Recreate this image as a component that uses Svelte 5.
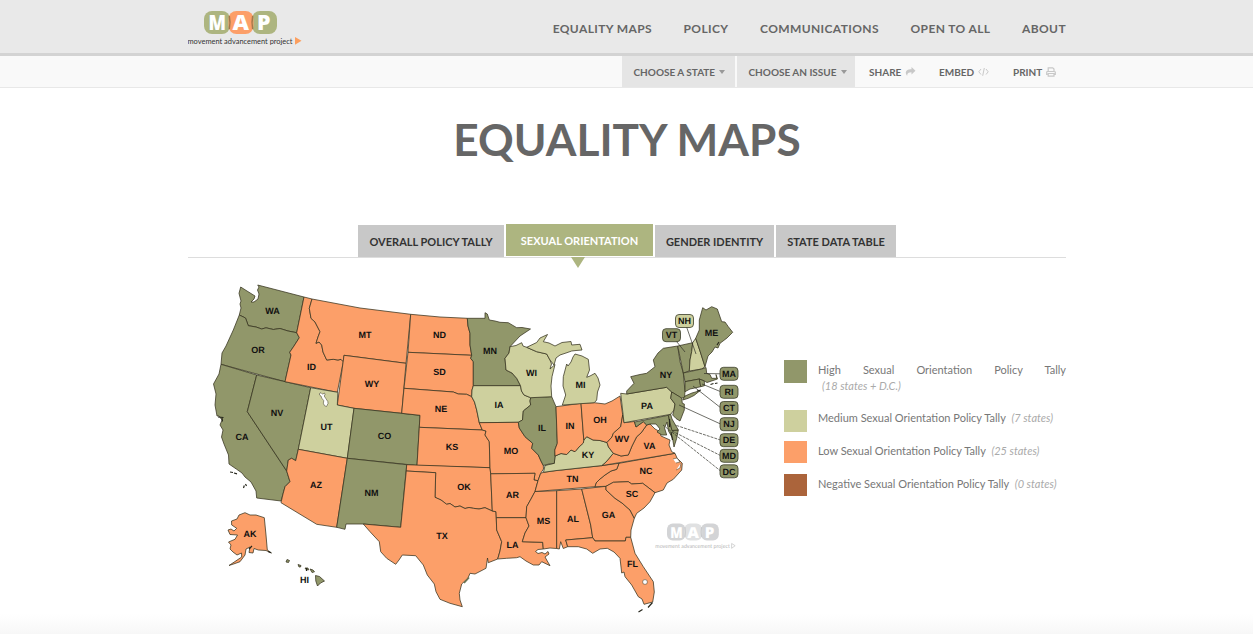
<script>
  const nav = ['EQUALITY MAPS', 'POLICY', 'COMMUNICATIONS', 'OPEN TO ALL', 'ABOUT'];
  const H = '#91976a', M = '#ced09e', L = '#fc9f69', N = '#ab643b';

  // State outlines: [fill, points]
  const states = [
    [H, '240.7,287 247,291 255,296 254,299 251,302 254,302 258,299 259,294 257.5,290 259,287 257.7,285 304,297 296.7,332.7 288,331 280,328.5 273.3,329.5 266,327.8 261.7,329 256,327 248.3,325.7 245.5,318 239.3,315 241,308 240,304 241,301 239,293.3'],
    [H, '239.3,315 245.5,318 248.3,325.7 256,327 261.7,329 266,327.8 273.3,329.5 280,328.5 288,331 296.7,332.7 299.3,337.7 294,346 289.7,352.3 291,355 285,381.7 221,364.3 222,353 226,346 233.3,330'],
    [H, '221,364.3 256.7,375 247.3,411.7 286.7,471 290,481.7 285,486.7 283,494 281,501 256.7,498 256,491 251,482 245,477 242,473 236.7,469.3 229,464 228.5,455 224,444 221.5,437 223,430 220,425 222,420 219,416 217,416 215,405 216,394 213.5,384 219,374'],
    [H, '256.7,375 310.7,387.7 298.3,449.3 295.7,460.7 291.7,458.3 288.3,460 286.7,471 247.3,411.7'],
    [L, '304,297 312,299 309.3,308.3 311,318.3 315,322 320,331.7 318,337 316,343.3 319,342 321.7,345 323,352 326.7,360 333.3,359.3 338,360 341,359.3 343.3,361.7 337.3,392.3 285,381.7 291,355 289.7,352.3 294,346 299.3,337.7 296.7,332.7'],
    [L, '312,299 360,308 410.7,314.3 406,363.3 344,355.3 343.3,361.7 341,359.3 338,360 333.3,359.3 326.7,360 323,352 321.7,345 319,342 316,343.3 318,337 320,331.7 315,322 311,318.3 309.3,308.3'],
    [L, '344,355.3 406,363.3 401.7,413.3 354,408.3 337.3,405'],
    [M, '310.7,387.7 337.8,392.3 337.3,405 354,408.3 347.3,458.3 298.3,449.3'],
    [H, '354,408.3 420,415.3 417,465.5 347.3,458.3'],
    [L, '298.3,449.3 347.3,458.3 336.7,527.3 316.7,524.3 281,502.7 283,494 285,486.7 290,481.7 286.7,471 288.3,460 291.7,458.3 295.7,460.7'],
    [H, '347.3,458.3 406.7,464.7 400.7,527.3 363.3,524 346,524 345,529.3 336.7,527.3'],
    [L, '410.7,314.3 440,317 467.3,318.3 468,326 470,333.3 470,345 471.7,355.3 408,352.3'],
    [L, '408,352.3 471.7,355.3 470.7,358.3 473.3,361.7 473.3,385.7 472,390 471.7,396.7 466.7,394.3 458.3,394 453.3,392 404,388.3'],
    [L, '404,388.3 453.3,392 458.3,394 466.7,394.3 471.7,396.7 474.5,402 476.7,410 479.3,422.7 482.3,430 419.3,427.3 420,415.3 401.7,413.3'],
    [L, '419.3,427.3 482.3,430 486,431 485,435 489.3,441.7 490,467.7 417,465.5'],
    [L, '406.7,464.7 490,467.7 490.7,473.8 492.3,511 485,507.7 479,509 473.3,508.3 469,507.5 465,508.5 460,506 455,507 450,503.5 446.7,504.3 441,500 435,497.3 435.7,472.7 406.3,471'],
    [L, '406.3,471 435.7,472.7 435,497.3 441,500 446.7,504.3 450,503.5 455,507 460,506 465,508.5 469,507.5 473.3,508.3 479,509 485,507.7 492.3,511 496,511.7 496.7,530 501.7,541.7 500,551 497.7,559 488.3,562.7 487.5,558 486,568.3 475,574 470,573.3 468,578 461.7,584 459.3,593.3 460,600 462.3,606.7 450,603.3 440,599.3 436,591.7 434.3,584 427.3,575 423.3,565 415.7,555.7 402.3,555 399,560 395.7,564.3 386.7,558.3 380.7,551.7 379.3,541.7 370,531.7 363.3,524 400.7,527.3'],
    [H, '467.3,318.3 485,318.3 485,312.7 487.3,314 489.3,320 495,321 500,322.3 508.3,322.7 516.7,327.7 522,327.5 530.5,329 520,336 510,346.7 509,353 505,358.3 506,370 512,373 516.7,378.3 520.5,385.7 473.3,385.7 473.3,361.7 470.7,358.3 471.7,355.3 470,345 470,333.3 468,326'],
    [M, '473.3,385.7 520.5,385.7 521.5,391 524,395 530.7,397.7 530,401 530.7,405 523.3,411 522.5,420 518.3,422.3 479.3,422.7 476.7,410 474.5,402 471.7,396.7 472,390'],
    [L, '479.3,422.7 518.3,422.3 519.3,428 525,436.7 532.7,443.3 531.7,448.3 538.3,455 541,461 543.3,465.5 543.5,469 540.7,473.3 538,480.7 534,480 535,473.3 490.7,473.8 490,467.7 489.3,441.7 485,435 486,431 482.3,430'],
    [L, '490.7,473.8 535,473.3 534,480 538,480.7 535,491.5 531,499 526.7,506.7 526,517.7 496.3,517.7 496,511.7 492.3,511'],
    [L, '496.3,517.7 526,517.7 529,526 525,533 522.3,541.7 542.7,542.3 543.3,549 538,549.5 535.5,551.500 538,553.5 542,552.5 545,554 548,551.5 549,554 545,557 546.7,560 550,565.7 541.7,561.7 539,565 533.3,565 526,561 520,556.7 516.7,557.7 506.7,558.3 497.7,559 500,551 501.7,541.7 496.7,530'],
    [L, '535,491.5 556.7,490.7 556.7,548.5 550,548 543.3,549 542.7,542.3 522.3,541.7 525,533 529,526 526,517.7 526.7,506.7 531,499'],
    [L, '556.7,490.7 581.7,489 590.7,525 592.7,537.7 565.7,540 567.7,546.7 563.3,548.5 560.7,541.7 559.3,549 556.7,548.5'],
    [L, '581.7,489 606,486.3 606,490 615,498.3 622,503 630,510 634.3,518.3 631,530 630.7,537.3 626,537.3 625.3,541 595,541 592.7,537.7 590.7,525'],
    [L, '565.7,540 592.7,537.7 595,541 625.3,541 626,537.3 630.7,537.3 635,553.3 643.3,566.7 653.3,581.7 654.3,592 652.7,602 644,604.3 642,599 638.3,596.7 631.7,585 625,576.7 624,572 621.7,573 620,558.3 614,552 607.3,548.3 600,549 592.7,553.3 586.7,549 578.3,546.7 567.7,546.7'],
    [L, '595,486.7 596,483 600,479 605,475 611,471 616.7,469.3 619,463.3 675,453.3 677,458 682.3,463.3 681.7,470 673.3,479.3 667,483 663.3,490 655,492.7 642.7,483.3 631.7,484 628.3,481.7 613.3,482.3 606,486.3'],
    [L, '606,486.3 613.3,482.3 628.3,481.7 631.7,484 642.7,483.3 655,492.7 650,501.7 644,508 636.7,513.3 634.3,518.3 630,510 622,503 615,498.3 606,490'],
    [L, '540.7,473.3 543.5,472.3 555,470.7 601.7,465.6 619,463.3 616.7,469.3 611,471 605,475 600,479 596,483 595,486.7 535,491.5 538,480.7'],
    [L, '601.7,465.6 606,462 613.3,453.3 621,456 628.3,455 632,446 636.7,436.7 641,433 646.7,425 650,424 655,429 660,431.7 661,436 670,440 669,445 671.7,451.7 675,453.3'],
    [M, '543.5,472.3 545,465.5 554.3,463.3 555,456 561,453.5 566.7,454.5 571,450 575,451.7 579,447 583.3,443 583.8,440 586.7,436.7 593,440 600,440.5 607,442.5 608.5,447 613.3,453.3 606,462 601.7,465.6 555,470.7'],
    [H, '530.7,397.7 551.7,396.7 556,406.7 556.7,425 557.3,443.3 554.8,450 555,456 554.3,463.3 549,464 543.3,465.5 541,461 538.3,455 531.7,448.3 532.7,443.3 525,436.7 519.3,428 518.3,422.3 522.5,420 523.3,411 530.7,405 530,401'],
    [L, '556,406.7 581,403.3 583.8,440 583.3,443 579,447 575,451.7 571,450 566.7,454.5 561,453.5 555,456 554.8,450 557.3,443.3'],
    [L, '581,403.3 594.3,402.7 605,404 612,401 620,396 622.7,415 620.7,426.7 613.3,433.3 612,437 607,442.5 600,440.5 593,440 586.7,436.7 583.8,440'],
    [L, '622.7,415 624,422.7 634.5,421.5 636,427 643.3,421.7 646.7,425 641,433 636.7,436.7 632,446 628.3,455 621,456 613.3,453.3 608.5,447 607,442.5 612,437 613.3,433.3 620.7,426.7'],
    [M, '510,346.7 516,345.5 521.7,342.7 523,346 526.7,347.3 536.7,351.7 546.7,354 550,360 551.5,364 550,369 555,364.5 552,376.7 551,386 551.7,396.7 530.7,397.7 524,395 521.5,391 520.5,385.7 516.7,378.3 512,373 506,370 505,358.3 509,353'],
    [M, '526.7,347.3 536.7,342.5 540,338 547.5,334.5 543.3,341.7 549,343 555,346 562,342.5 571,341.5 571.7,345 580,344.3 582,350 576,350.5 571.7,351 566,353 560,355 556,358 554,365 550,360 546.7,354 536.7,351.7'],
    [M, '575,354 582,356 588.3,359.3 589.5,370 586.7,377.3 590,376 595,373.3 598,378 600,385 597.5,392 596.7,400 594.3,402.7 562.3,405 565.7,395 563,386 563.3,376.7 566.7,364 568,366 571,362 573,357'],
    [M, '620.7,393.3 626.7,394 666.7,387.3 671.7,392 670.7,398.3 675,404 674,410 670.7,414.3 624,422.7'],
    [H, '626.7,394 626.7,391 634,383.3 630.7,376.7 640,374.5 646.7,373.3 655,366.7 653.3,360 658,353 663.3,348.3 677.7,346 680,361.7 683.3,373 685,391.7 684.5,397 681.7,398.3 671.7,392 666.7,387.3'],
    [H, '682.7,400 685,396 692,393 700,390.7 694,395.5 688.3,398.3'],
    [H, '671.7,392 681.7,398 682.3,403.3 684.3,404 684.3,410 680,421 676,418.5 672.7,415 674,410 675,404 670.7,398.3'],
    [H, '634.5,422 668.3,415.3 670.5,425 672,430.5 678.3,430 676.7,438.3 674,447 672.5,438 668.5,431 667,422 664.5,428 666.7,435 662,435 657,432 660,429 656,424 650,424 646.7,425 643.3,421.7 636,427'],
    [H, '668.3,415.3 670.7,414.3 672,419 678.3,430 672,430.5'],
    [H, '677.7,346 692.7,342.7 691.7,351.7 690,360 689.3,371 683.3,373'],
    [M, '692.7,342.7 695.7,338.3 700,351 705,366.7 701.7,369 689.3,371 690,360 691.7,351.7'],
    [H, '695.7,338.3 699.3,330 699.3,320 702.7,307.7 706,310 711.7,306.7 717.3,309 721.7,321.7 725,322 728.3,326.7 732.7,332.3 727,338 720,343.3 718,348 715,347 712,352 708,356 705,366.7 700,351'],
    [H, '683.3,373 701.7,369 706,367.5 706.7,373.3 710,374.5 711.7,378.3 716.7,378.3 716,374.5 717.5,379 710,381.5 707,382.5 704.3,381 699.3,379 685,381.7'],
    [H, '685,381.7 699.3,379 700.7,386.7 690,389 685,391.7'],
    [H, '699.3,379 704.3,381 704.5,385.7 700.7,386.7'],
    [L, '245,512.7 250,515 256,515 264.3,517.7 266,535 267.3,550 271.5,553 266,550.5 258.3,550 254,548.5 253,553 249,552.5 250,547 246,549 245,555 240,561.7 235,563.5 229,565.5 235,561.5 241.7,557 241.5,553 237,555 233,552 230,549 231,545 228.5,542 235,539.3 237.5,535 230,534.5 228,530 231,529 234,531 236.7,528.3 231.7,525 231.5,521 237,519 239,515'],
    [H, '315.5,575.5 319.5,576.5 324.5,581 320.5,583 317.5,586 315.8,581'],
    [H, '287,559.5 289.5,560.5 288.500,562.5 286,562'],
    [H, '298,564.5 301,565.5 300.5,567 299,567'],
    [H, '305,568 308,568 308.5,570 306,569.5'],
    [H, '310,569 313,570 314.5,571.8 312,572.5']
  ];

  const labels = [
    ['WA', 272.5, 313.5], ['OR', 258, 353], ['ID', 311.5, 370], ['MT', 365, 338], ['ND', 439.5, 338],
    ['SD', 439.5, 374.5], ['NE', 441, 411.5], ['WY', 372, 387], ['NV', 277, 415.5], ['CA', 242, 440],
    ['UT', 326.5, 429.5], ['CO', 384.5, 439], ['KS', 452, 450], ['AZ', 316, 488.2], ['NM', 371.5, 495.5],
    ['OK', 464, 490], ['TX', 442, 539], ['MN', 490, 354.2], ['IA', 499, 408], ['MO', 511, 454],
    ['AR', 512.5, 498], ['LA', 512.5, 547.5], ['WI', 531.5, 375.5], ['MI', 580.5, 388], ['IL', 542, 430.5],
    ['IN', 570, 428.7], ['OH', 600, 423.3], ['KY', 588, 457.8], ['WV', 622, 442], ['VA', 649.5, 448.5],
    ['PA', 647, 408.5], ['NY', 666, 377.5], ['ME', 711.5, 335.8], ['TN', 572.5, 482], ['NC', 646, 474],
    ['SC', 632, 497], ['GA', 608.5, 517.8], ['AL', 573, 522.3], ['MS', 543.5, 523.8], ['FL', 632.5, 567],
    ['AK', 250, 537], ['HI', 304.5, 582.8]
  ];

  // Callouts: [name, centre x, centre y, fill, leader target x, y, dashed]
  const callouts = [
    ['NH', 684.5, 321, M, 696, 354, false], ['VT', 671.5, 335.2, H, 685, 352, false],
    ['MA', 729, 373.8, H, 704, 373.5, false], ['RI', 729, 391.8, H, 702, 384, false],
    ['CT', 729, 408, H, 693, 386, false], ['NJ', 729, 424.2, H, 679, 405, false],
    ['DE', 729, 440.2, H, 675, 425, true], ['MD', 729, 455.8, H, 672, 431, true],
    ['DC', 729, 471.3, H, 663, 425, true]
  ];

  const legend = [
    [H, 'High Sexual Orientation Policy Tally', '(18 states + D.C.)', true],
    [M, 'Medium Sexual Orientation Policy Tally', '(7 states)', false],
    [L, 'Low Sexual Orientation Policy Tally', '(25 states)', false],
    [N, 'Negative Sexual Orientation Policy Tally', '(0 states)', false]
  ];
</script>

{#snippet mark(a, b, overlap, letter, word)}
  <rect x="0" y="0" width="26" height="23" rx="8" fill={a} />
  <rect x="48" y="0" width="25" height="23" rx="8" fill={a} />
  <rect x="24.5" y="0" width="25" height="23" rx="8" fill={b} />
  <path d="M25.300 5q1.400 6.500 0 13M48.700 5q-1.400 6.500 0 13" stroke={overlap} stroke-width="1.500" fill="none" />
  <g font-family="Open Sans" font-weight="800" font-size="20.500" fill={letter}>
    <text x="4.500" y="19" textLength="17.500" lengthAdjust="spacingAndGlyphs">M</text>
    <text x="28.500" y="19" textLength="16.500" lengthAdjust="spacingAndGlyphs">A</text>
    <text x="53" y="19" textLength="13.500" lengthAdjust="spacingAndGlyphs">P</text>
  </g>
  <text x="-16.500" y="32.500" textLength="105" lengthAdjust="spacingAndGlyphs" font-family="Lato" font-size="7.500" fill={word}>movement advancement project</text>
{/snippet}

<div class="page">
  <header>
    <div class="wrap top">
      <svg class="logo" width="120" height="42" viewBox="-16 -4 120 42" aria-label="MAP">
        {@render mark('#adb580', '#fc9f69', '#a5794b', '#fff', '#333')}
        <path d="M91 26l6.500 3.800-6.500 4z" fill="#fc9f5f" />
      </svg>
      <nav>
        {#each nav as n}<a href="#top">{n}</a>{/each}
      </nav>
    </div>
  </header>
  <div class="sub">
    <div class="wrap tools">
      <button class="pick state">CHOOSE A STATE <i></i></button>
      <button class="pick issue">CHOOSE AN ISSUE <i></i></button>
      <span class="share">SHARE
        <svg width="11" height="10" viewBox="0 0 11 10"><path d="M6.500 0L10.500 3.700 6.500 7.400V5.200C3.500 5.200 2 6 2.200 9 -.5 6 .5 2.200 6.500 2.200z" fill="#c8c8c8" /></svg>
      </span>
      <span class="embed">EMBED
        <svg width="11" height="10" viewBox="0 0 11 10"><path d="M3 2L.8 4.800 3 7.500M8 2l2.200 2.800L8 7.500M6.300 1L4.700 8.800" fill="none" stroke="#c8c8c8" /></svg>
      </span>
      <span class="print">PRINT
        <svg width="10" height="10" viewBox="0 0 10 10"><path d="M2.200 4.500V.8h4.500l1.300 1.300v2.400M1.500 7.500H.7V5.300q0-.8.8-.8h7q.8 0 .8.800v2.200h-.8M2.200 6.500h5.800v2.700H2.200z" fill="none" stroke="#c8c8c8" stroke-width="1.200" /></svg>
      </span>
    </div>
  </div>

  <main class="wrap">
    <h1>EQUALITY MAPS</h1>
    <div class="tabs">
      <button class="t1">OVERALL POLICY TALLY</button>
      <button class="t2 on">SEXUAL ORIENTATION</button>
      <button class="t3">GENDER IDENTITY</button>
      <button class="t4">STATE DATA TABLE</button>
    </div>
    <div class="body">
      <svg class="map" width="596" height="365" viewBox="188 258 596 365">
        <g stroke="#35331f" stroke-width=".75" stroke-linejoin="round">
          {#each states as [fill, pts]}<polygon {fill} points={pts} />{/each}
        </g>
        <g fill="#fff" stroke="#35331f" stroke-width=".5">
          <path d="M319.500 393.500l1.500-.8 1.500 1.500 2-1.200.5 1.500-.8 1.500 1.600 2.500 2 3 .2 2-1.500 3-2-.8-1.200-2.500.5-2.500-2-2.500-.8-2.200-1.500-1z" />
          <circle cx="645" cy="582" r="2.400" />
          <path d="M673 459l4-1 3 4-4 1M676 470l4-2 1-5" />
        </g>
        <g fill="none" stroke="#26261c" stroke-width="1.200">
          <path d="M230 472l3 .5M234 473l3 .8M243.500 488l.8-2.500M245.500 484l1 2M638.500 612l4-2.500M648 607.500l4.500-5M669.500 419v8M671 432l1.500 8M717 345l2-3M710.500 384.500l3-1M715 383.500l2.500-.5M218 417l5.500.500M222 418l.5 3.500M249 549l3-3M306.500 568v3M697 391l4-1M268 551.500l3 1.300" />
          <path d="M464 583l5-5.500" stroke="#6b7352" stroke-width="1.800" />
        </g>
        <g stroke="#303028" stroke-width=".7">
          {#each callouts as [, x, y, , tx, ty, dash]}
            <line x1={x > 700 ? x - 8 : x} y1={y} x2={tx} y2={ty} stroke-dasharray={dash ? '3 1' : 'none'} />
          {/each}
        </g>
        <g font-family="Liberation Sans" font-weight="700" font-size="9" text-anchor="middle" fill="#111">
          {#each labels as [t, x, y]}<text {x} {y}>{t}</text>{/each}
          {#each callouts as [t, x, y, fill]}
            <rect x={x - 9} y={y - 6.5} width="18" height="13" rx="3.500" {fill} stroke="#3b3d2a" stroke-width=".8" />
            <text {x} y={y + 3.2}>{t}</text>
          {/each}
        </g>
        <g transform="translate(667 523.500) scale(.71 .74)">
          {@render mark('#d3d4d6', '#e0e1e2', '#c9cacc', '#fff', '#b5b5b5')}
          <path d="M91 27l5 3-5 3.500z" fill="none" stroke="#c4c4c4" />
        </g>
      </svg>
      <ul>
        {#each legend as [color, text, count, tall]}
          <li class:tall>
            <b style:background={color}></b>
            <p><span>{text}</span> <em>{count}</em></p>
          </li>
        {/each}
      </ul>
    </div>
  </main>
  <div class="fade"></div>
</div>

<style>
  :global(body) { background: #fff; overflow: hidden; }
  .page { position: relative; height: 634px; overflow: hidden; font-family: Lato, sans-serif; color: #666; display: flex; flex-direction: column; }
  .wrap { width: 878px; margin-left: 188px; }
  header { height: 53px; background: #e9e9e9; border-bottom: 3px solid #d3d3d3; flex: none; }
  .top { display: flex; justify-content: space-between; }
  .logo { margin-top: 7px; flex: none; }
  nav { display: flex; gap: 31.600px; padding-top: 21px; }
  nav a { color: #666; text-decoration: none; font-weight: 700; font-size: 12px; line-height: 16px; letter-spacing: .38px; white-space: nowrap; }
  .sub { height: 31px; background: #f9f9f9; border-bottom: 1px solid #e8e8e8; flex: none; }
  .tools { display: flex; height: 31px; align-items: center; padding-left: 434px; box-sizing: border-box; font-weight: 700; font-size: 10px; }
  .tools > * { white-space: nowrap; display: flex; align-items: center; }
  .tools span { gap: 4px; flex: none; }
  button { border: 0; font-family: inherit; font-weight: 700; color: #666; flex: none; box-sizing: border-box; white-space: nowrap; }
  .pick { background: #e5e5e5; height: 31px; font-size: 10px; padding: 0 0 0 11.500px; gap: 4px; }
  .pick i { border: 3.500px solid transparent; border-top: 4px solid #999; border-bottom: 0; }
  .state { width: 113px; }
  .issue { width: 118px; margin-left: 2px; }
  .share { width: 70px; margin-left: 14px; }
  .embed { width: 74px; }
  h1 { margin: 23px 0 0; text-align: center; font-size: 44.200px; line-height: 56px; font-weight: 700; color: #666; white-space: nowrap; }
  .tabs { margin-top: 57px; height: 33px; border-bottom: 1px solid #ddd; display: flex; gap: 2px; padding-left: 170px; align-items: flex-end; }
  .tabs button { height: 32px; background: #c8c8c8; color: #333; font-size: 11px; padding: 0; text-align: center; }
  .tabs .on { position: relative; background: #adb580; color: #fff; bottom: 1px; }
  .on::after { content: ''; position: absolute; left: 65px; top: 33px; border: 7px solid transparent; border-top: 11px solid #adb580; border-bottom: 0; }
  .t1 { width: 146px; } .t2 { width: 147px; } .t3 { width: 119px; } .t4 { width: 120px; }
  .body { display: flex; }
  .map { flex: none; text-rendering: geometricPrecision; }
  ul { list-style: none; margin: 102px 0 0; padding: 0; width: 282px; }
  li { display: flex; gap: 11px; height: 33px; }
  li.tall { height: 50px; }
  b { width: 23px; height: 22px; flex: none; }
  .tall b { height: 23px; }
  li:nth-child(n + 3) b { margin-top: -2px; }
  p { margin: 0; font-size: 11px; line-height: 16px; color: #777; white-space: nowrap; }
  .tall p { width: 248px; white-space: normal; text-align: justify; padding-top: 2px; }
  .tall p span { display: block; text-align-last: justify; }
  em { color: #aaa; margin-left: 3px; }
  .tall em { margin-left: 4px; }
  .fade { position: absolute; inset: auto 0 0; height: 20px; background: linear-gradient(#fff0, #f7f7f7); }
</style>
